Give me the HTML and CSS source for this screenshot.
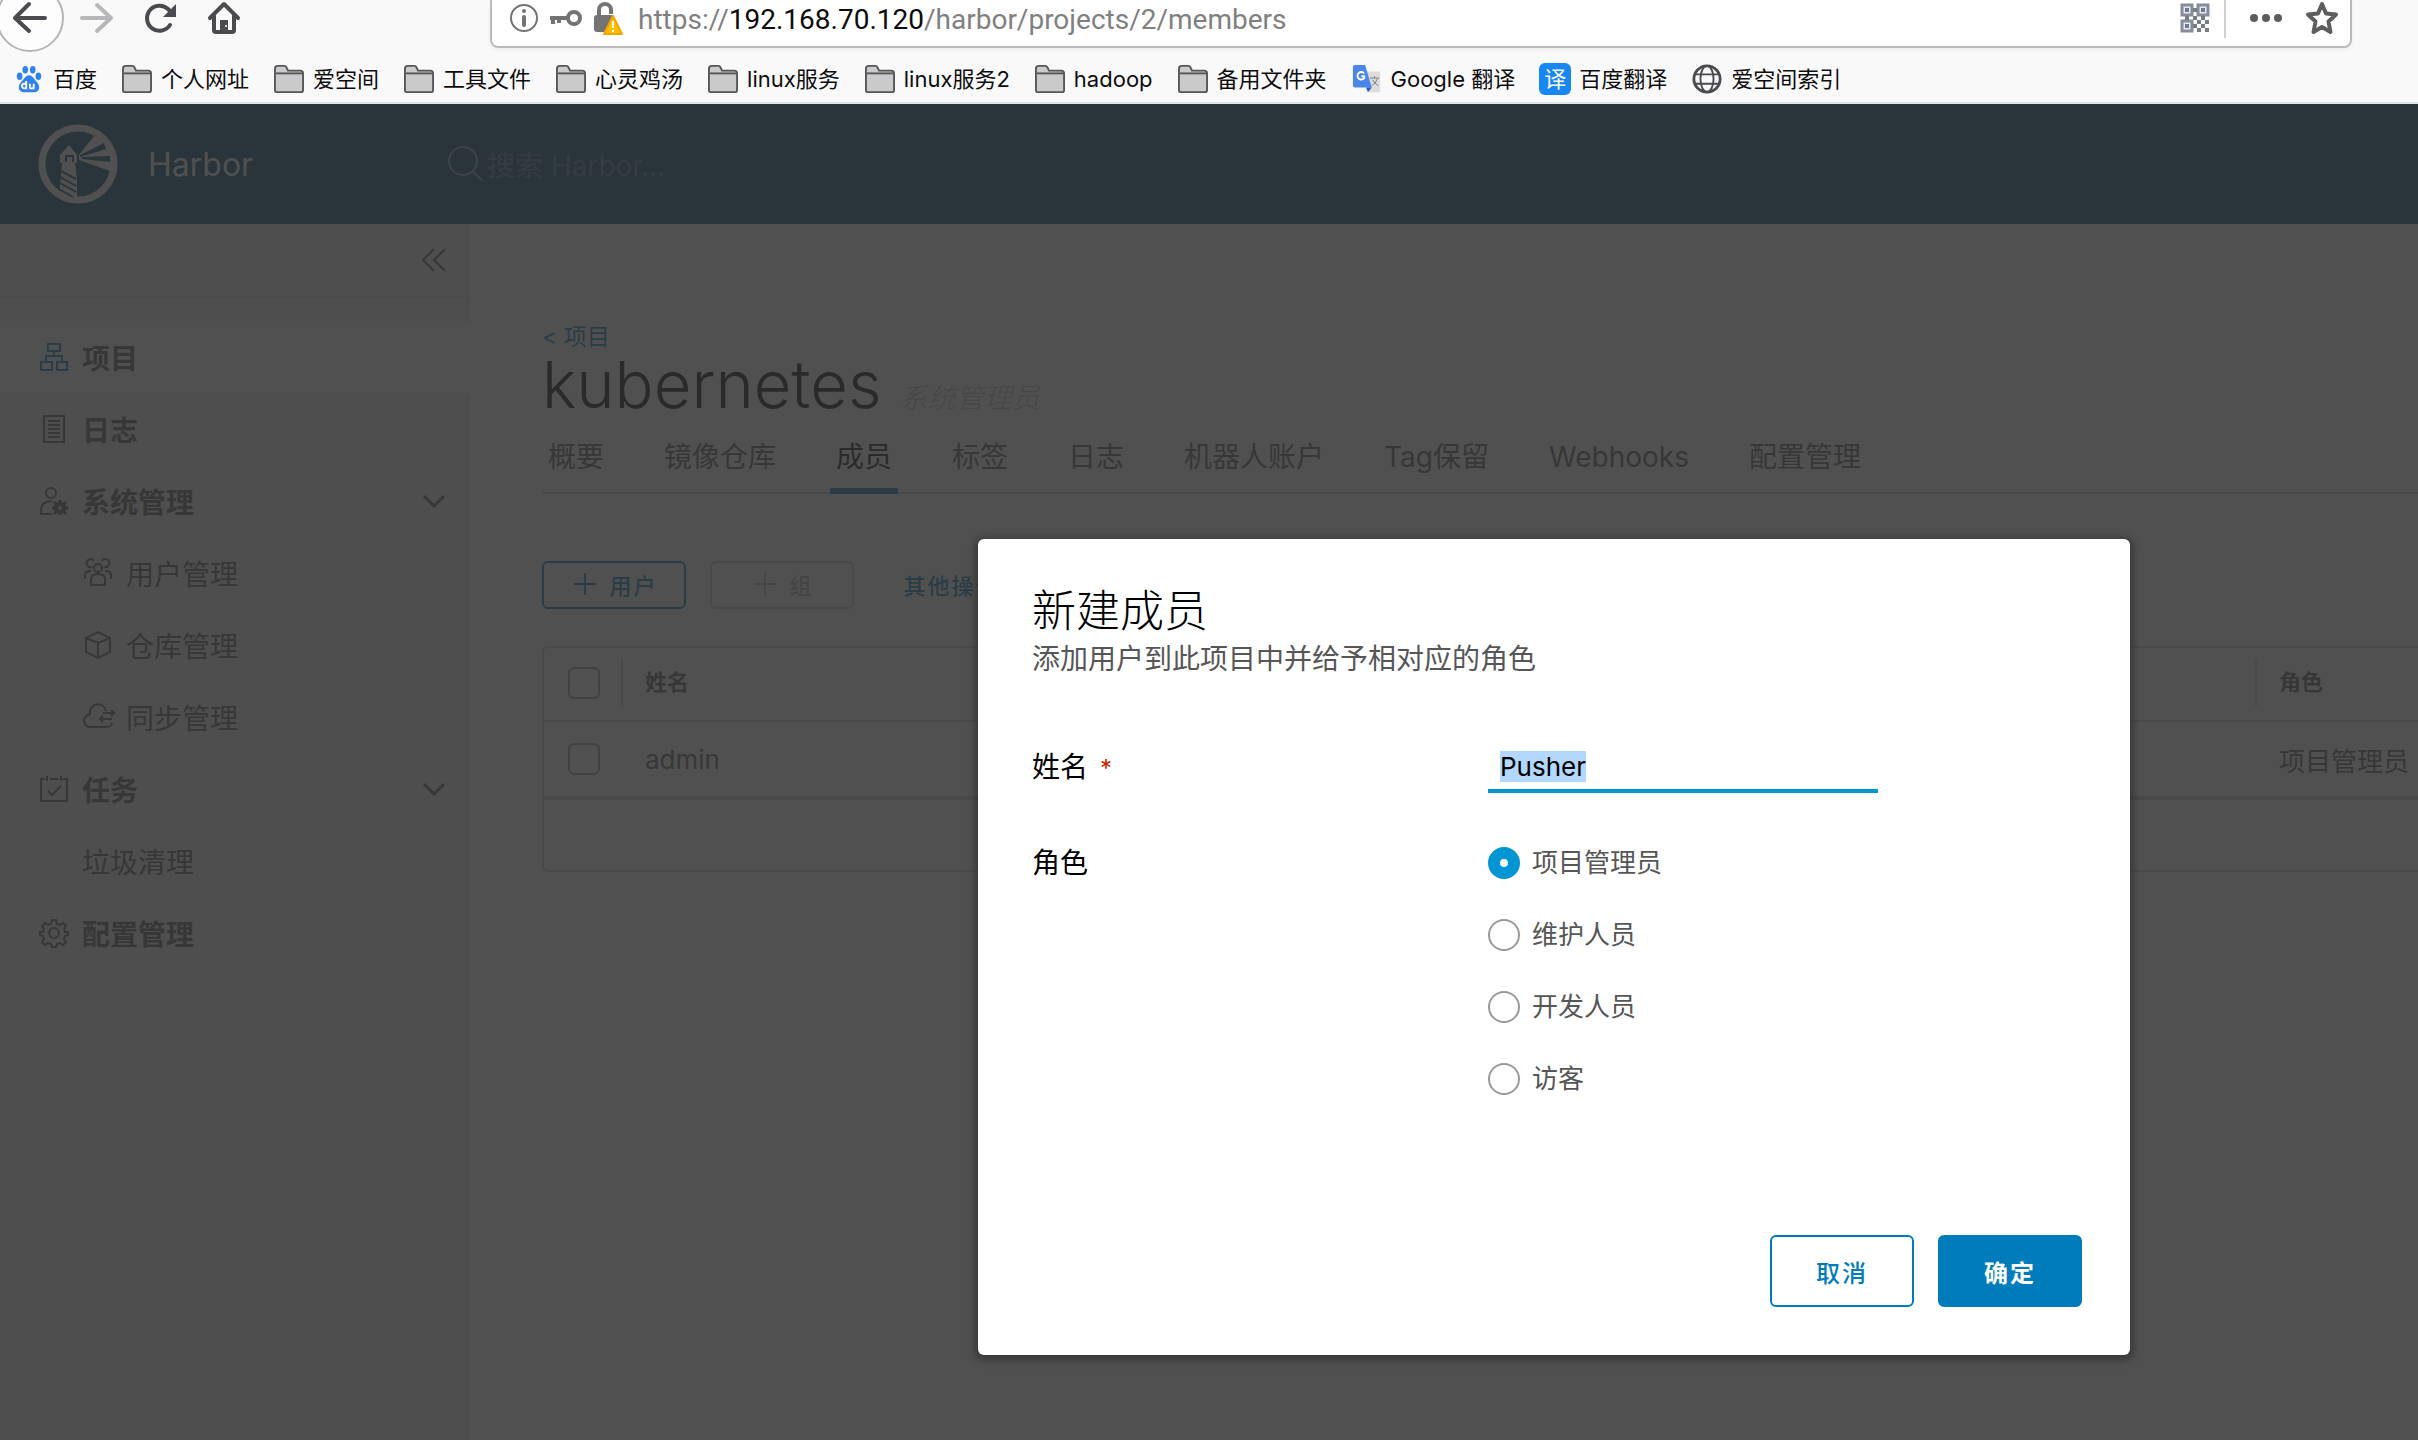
FILE: index.html
```html
<!DOCTYPE html>
<html lang="zh-CN">
<head>
<meta charset="utf-8">
<meta name="viewport" content="width=device-width, initial-scale=1">
<title>Harbor</title>
<link rel="stylesheet" href="styles.css">
</head>
<body>
<svg class="sprite" aria-hidden="true">
  <symbol id="folder" viewBox="0 0 32 32">
    <path d="M1 28V5q0-3 3-3h7q1.500 0 2.500 2l1.500 3h13q3 0 3 3v18q0 2-2 2H3q-2 0-2-2z" fill="#cacaca" stroke="#55555a" stroke-width="2"/>
    <path d="M2 10h28" stroke="#55555a" stroke-width="2"/>
  </symbol>
  <symbol id="chevron" viewBox="0 0 22 22"><path d="M1 6l10 10L21 6" fill="none" stroke="currentColor" stroke-width="3"/></symbol>
  <symbol id="plus" viewBox="0 0 24 24"><path d="M12 1v22M1 12h22" fill="none" stroke="currentColor" stroke-width="2"/></symbol>
</svg>

<div class="browser">
  <div class="toolbar">
    <nav class="history" aria-label="浏览">
      <button class="tool back" type="button" aria-label="后退">
        <svg width="64" height="52" viewBox="0 0 64 52"><circle cx="30" cy="18" r="33" fill="#fdfdfd" stroke="#b5b5b7" stroke-width="2"/><path d="M45 18H16M29 4L15 18l14 13" fill="none" stroke="#4a4a4f" stroke-width="4" stroke-linecap="round" stroke-linejoin="round"/></svg>
      </button>
      <button class="tool" type="button" aria-label="前进">
        <svg width="32" height="36" viewBox="0 0 32 36"><path d="M2 18h28M17 5l14 13-14 13" fill="none" stroke="#b7b7ba" stroke-width="4" stroke-linecap="round" stroke-linejoin="round"/></svg>
      </button>
      <button class="tool" type="button" aria-label="刷新">
        <svg width="32" height="36" viewBox="0 0 32 36"><path d="M26 25A12.500 12.500 0 1 1 24 9l5 5" fill="none" stroke="#4a4a4f" stroke-width="4" stroke-linecap="round"/><path d="M32 4v13H19z" fill="#4a4a4f"/></svg>
      </button>
      <button class="tool" type="button" aria-label="主页">
        <svg width="32" height="36" viewBox="0 0 32 36"><path d="M2 18L16 4l14 14M6 16v14q0 2 2 2h16q2 0 2-2V16" fill="none" stroke="#4a4a4f" stroke-width="4" stroke-linecap="round" stroke-linejoin="round"/><path d="M12 32V20h8v12z" fill="#4a4a4f"/><circle cx="18" cy="26" r="1" fill="#fff"/></svg>
      </button>
    </nav>
    <div class="address">
      <svg width="28" height="32" viewBox="0 0 28 32"><circle cx="14" cy="16" r="13" fill="none" stroke="#737373" stroke-width="2"/><path d="M14 15v8" stroke="#737373" stroke-width="4" stroke-linecap="round"/><circle cx="14" cy="9" r="2" fill="#737373"/></svg>
      <svg width="34" height="32" viewBox="0 0 34 32"><circle cx="25" cy="16" r="6" fill="none" stroke="#737373" stroke-width="4"/><path d="M1 16h18M4 16v6M10 16v5" fill="none" stroke="#737373" stroke-width="4"/></svg>
      <svg width="28" height="32" viewBox="0 0 28 32"><path d="M5 16V8a6 6 0 0 1 12 0v4" fill="none" stroke="#737373" stroke-width="4"/><rect x="0" y="13" width="20" height="17" rx="3" fill="#737373"/><path d="M19 14l9 18H10z" fill="#ffbf00" stroke="#f5a400" stroke-width="2" stroke-linejoin="round"/><path d="M19 19v7M19 28v2" stroke="#fff" stroke-width="2"/></svg>
      <span class="url">https://<span class="host">192.168.70.120</span>/harbor/projects/2/members</span>
      <svg width="28" height="28" viewBox="0 0 28 28"><path d="M1 1h10v10H1zM17 1h10v10H17zM1 17h10v10H1z" fill="#e4e9f2" stroke="#858d9a" stroke-width="3"/><path d="M4 4h4v4H4zM20 4h4v4h-4zM4 20h4v4H4zM12 4h4v4h-4zM4 12h4v4H4zM12 12h4v4h-4zM20 12h4v4h-4zM16 16h4v4h-4zM24 16h4v4h-4zM12 20h4v4h-4zM20 20h4v4h-4zM16 24h4v4h-4zM24 24h4v4h-4z" fill="#777b82"/></svg>
      <span class="divider"></span>
      <button class="tool" type="button" aria-label="更多"><svg width="32" height="36" viewBox="0 0 32 36" fill="#5d5d60"><circle cx="4" cy="18" r="4"/><circle cx="16" cy="18" r="4"/><circle cx="28" cy="18" r="4"/></svg></button>
      <button class="tool" type="button" aria-label="收藏"><svg width="32" height="36" viewBox="0 0 32 36"><path d="M16 4l4 9.500 10 1-7.500 7L24.500 32 16 27l-8.500 5 2-10.500L2 14.500l10-1z" fill="none" stroke="#5d5d60" stroke-width="4" stroke-linejoin="round"/></svg></button>
    </div>
  </div>
  <nav class="bookmarks" aria-label="书签">
    <a href="#"><svg viewBox="0 0 32 32" fill="#3083ee"><ellipse cx="6" cy="13" rx="3" ry="4"/><ellipse cx="12" cy="6" rx="3" ry="4"/><ellipse cx="20" cy="6" rx="3" ry="4"/><ellipse cx="26" cy="13" rx="3" ry="4"/><path d="M16 12c4 0 6 5 9 8 4 5 1 10-3 10H10c-4 0-7-5-3-10 3-3 5-8 9-8z"/><path d="M13 18v8h-2a2 2 0 0 1 0-5h2M17 21v4q0 1 2 1h2v-5" fill="none" stroke="#fff" stroke-width="2"/></svg>百度</a>
    <a href="#"><svg><use href="#folder"/></svg>个人网址</a>
    <a href="#"><svg><use href="#folder"/></svg>爱空间</a>
    <a href="#"><svg><use href="#folder"/></svg>工具文件</a>
    <a href="#"><svg><use href="#folder"/></svg>心灵鸡汤</a>
    <a href="#"><svg><use href="#folder"/></svg>linux服务</a>
    <a href="#"><svg><use href="#folder"/></svg>linux服务2</a>
    <a href="#"><svg><use href="#folder"/></svg>hadoop</a>
    <a href="#"><svg><use href="#folder"/></svg>备用文件夹</a>
    <a href="#"><svg viewBox="0 0 32 32"><path d="M14 8h16v22H18z" fill="#dcdcdc"/><path d="M3 1h11l7 24H3q-2 0-2-2V3q0-2 2-2z" fill="#4a86e8"/><path d="M15 25h6l-4 5z" fill="#2a56c6"/><path d="M13 10a4 4 0 1 0 0 5v-2h-3" fill="none" stroke="#fff" stroke-width="2"/><path d="M19 15h10M24 13v2M27 16q-2 5-6 7M22 17q2 4 6 6" fill="none" stroke="#777" stroke-width="1"/></svg>Google 翻译</a>
    <a href="#"><span class="tile">译</span>百度翻译</a>
    <a href="#"><svg viewBox="0 0 32 32" fill="none" stroke="#4a4a4f" stroke-width="3"><circle cx="16" cy="16" r="14"/><ellipse cx="16" cy="16" rx="7" ry="14" stroke-width="2"/><path d="M3 11h26M3 21h26" stroke-width="2"/></svg>爱空间索引</a>
  </nav>
</div>

<div class="app">
  <header class="header">
    <a class="brand" href="#">
      <svg width="80" height="80" viewBox="0 0 80 80"><circle cx="40" cy="40" r="36" fill="none" stroke="#fff" stroke-width="7"/><path d="M41 31L56 12l12 5 9 18-5 12-31-11z" fill="#fff"/><path d="M42 31l24-12 2 6-26 8zM44 33l28-1v6l-28-3z" fill="#004a70"/><path fill-rule="evenodd" d="M31 21l8 10v8h-2l2 16v21l-18-3 3-34h-2v-8zM27 31v7h2v-5h5v5h2v-7z" fill="#fff"/><path d="M23 47l15 8M22 53l16 9M22 59l16 9M21 65l14 8" stroke="#004a70" stroke-width="2"/></svg>
      <span>Harbor</span>
    </a>
    <label class="search">
      <svg width="40" height="40" viewBox="0 0 40 40" fill="none" stroke="currentColor" stroke-width="2"><circle cx="16" cy="17" r="14"/><path d="M26 28l10 9"/></svg>
      <input type="search" placeholder="搜索 Harbor..." aria-label="搜索 Harbor">
    </label>
  </header>

  <div class="workspace">
    <aside class="sidebar">
      <div class="collapse"><button type="button" aria-label="收起"><svg width="24" height="24" viewBox="0 0 24 24" fill="none" stroke="currentColor" stroke-width="2"><path d="M12 1L1 12l11 11M23 1L12 12l11 11"/></svg></button></div>
      <nav class="menu" aria-label="主菜单">
        <a class="item active" href="#"><svg viewBox="0 0 28 28"><path d="M8 1h12v7H8zM1 19h11v8H1zM17 19h10v8H17zM14 8v5M6 18v-5h16v5"/></svg>项目</a>
        <a class="item" href="#"><svg viewBox="0 0 28 28"><path d="M4 1h20v26H4zM8 6h12M8 10h12M8 14h12M8 18h12M8 22h12"/></svg>日志</a>
        <a class="item" href="#"><svg viewBox="0 0 28 28"><circle cx="11" cy="6" r="5"/><path d="M12 27H1v-5q0-7 11-8"/><circle cx="20" cy="21" r="4" stroke-width="4"/><path d="M20 13v3M20 26v2M12 21h3M25 21h3M14 15l3 3M23 24l3 3M26 15l-3 3M17 24l-3 3" stroke-width="3"/></svg>系统管理<svg class="caret"><use href="#chevron"/></svg></a>
        <a class="item sub" href="#"><svg viewBox="0 0 28 28"><circle cx="14" cy="9" r="4"/><path d="M7 26v-6q0-5 7-5t7 5v6zM8 8a4 4 0 1 1 2-6M20 8a4 4 0 1 0-2-6M1 20v-4q0-4 6-4M27 20v-4q0-4-6-4"/></svg>用户管理</a>
        <a class="item sub" href="#"><svg viewBox="0 0 28 28"><path d="M14 1l12 6v14l-12 6-12-6V7zM2 7l12 5 12-5M14 12v15"/></svg>仓库管理</a>
        <a class="item sub" href="#"><svg viewBox="0 0 28 28"><path d="M22 8a8 8 0 0 0-16 3q-6 2-6 7 1 6 6 6h16q5 0 6-4M19 10h10M27 7l3 3-3 3M28 16H16M19 13l-3 3 3 3"/></svg>同步管理</a>
        <a class="item" href="#"><svg viewBox="0 0 28 28"><path d="M5 4H1v22h26V4h-4M7 1v5M21 1v5M10 4h8M8 16l4 4 9-9"/></svg>任务<svg class="caret"><use href="#chevron"/></svg></a>
        <a class="item plain" href="#">垃圾清理</a>
        <a class="item" href="#"><svg viewBox="0 0 28 28"><circle cx="14" cy="14" r="5"/><path d="M12 1h4l1 4 3 1 3-2 3 3-2 3 1 3 3 0v3l-3 1-1 3 2 3-3 3-3-2-3 1-1 3h-4l-1-3-3-1-3 2-3-3 2-3-1-3-3-1v-3h3l1-3-2-3 3-3 3 2 3-1z"/></svg>配置管理</a>
      </nav>
    </aside>

    <main class="content">
      <a class="crumb" href="#">&lt; 项目</a>
      <h1>kubernetes <em>系统管理员</em></h1>
      <nav class="tabs" aria-label="项目">
        <a href="#">概要</a><a href="#">镜像仓库</a><a class="current" href="#" aria-current="page">成员</a><a href="#">标签</a><a href="#">日志</a><a href="#">机器人账户</a><a href="#">Tag保留</a><a href="#">Webhooks</a><a href="#">配置管理</a>
      </nav>
      <div class="actions">
        <button class="btn small" type="button"><svg><use href="#plus"/></svg>用户</button>
        <button class="btn small" type="button" disabled><svg><use href="#plus"/></svg>组</button>
        <button class="btn small link" type="button">其他操作</button>
      </div>
      <table class="grid">
        <colgroup><col class="col-check"><col><col class="col-role"></colgroup>
        <thead><tr><th><input type="checkbox" aria-label="全选"></th><th><div>姓名</div></th><th><div>角色</div></th></tr></thead>
        <tbody><tr><td><input type="checkbox" aria-label="选择 admin"></td><td>admin</td><td>项目管理员</td></tr></tbody>
        <tfoot><tr><td colspan="3"></td></tr></tfoot>
      </table>
    </main>
  </div>

  <div class="backdrop">
    <form class="modal" role="dialog" aria-labelledby="title">
      <h2 id="title">新建成员</h2>
      <p>添加用户到此项目中并给予相对应的角色</p>
      <div class="row name-row">
        <label for="name">姓名 <span class="required">*</span></label>
        <input class="text" id="name" type="text" value="Pusher" autofocus>
      </div>
      <div class="row" role="radiogroup" aria-labelledby="role">
        <span id="role">角色</span>
        <div class="options">
          <label><input type="radio" name="role" checked>项目管理员</label>
          <label><input type="radio" name="role">维护人员</label>
          <label><input type="radio" name="role">开发人员</label>
          <label><input type="radio" name="role">访客</label>
        </div>
      </div>
      <div class="buttons">
        <button class="btn" type="button">取消</button>
        <button class="btn primary" type="submit">确定</button>
      </div>
    </form>
  </div>
</div>
<script src="main.js"></script>
</body>
</html>
```
FILE: main.js
```js
const nameField = document.getElementById("name");
nameField.focus();
nameField.select();
```
FILE: styles.css
```css
* { box-sizing: border-box; }

body {
  margin: 0;
  min-height: 100vh;
  display: flex;
  flex-direction: column;
  overflow-x: hidden;
  font-family: Inter, "Noto Sans CJK SC", sans-serif;
  color: #565656;
}

a { color: inherit; text-decoration: none; }
button, input { font: inherit; color: inherit; }
svg { flex: none; overflow: visible; }
.sprite { position: absolute; width: 0; height: 0; }

/* Browser chrome */
.browser {
  background: #f9f9fa;
  border-bottom: 2px solid #dfe6e8;
  color: #0c0c0d;
  overflow: hidden;
}
.toolbar { display: flex; align-items: flex-start; height: 52px; padding-right: 66px; }
.history { display: flex; flex: none; width: 490px; gap: 32px; }
.tool { display: flex; padding: 0; border: 0; background: none; }
.back { margin-right: -16px; }
.address {
  flex: 1;
  display: flex;
  align-items: center;
  gap: 11px;
  height: 48px;
  padding: 0 12px 10px 18px;
  background: #fff;
  border: 2px solid #bcbcbc;
  border-top: 0;
  border-radius: 0 0 8px 8px;
  box-shadow: 0 2px 4px rgba(0, 0, 0, .05);
}
.url { flex: 1; padding: 3px 0 0 5px; font-family: Roboto, sans-serif; font-size: 28px; line-height: 36px; color: #808080; white-space: nowrap; }
.host { color: #0c0c0d; }
.divider { width: 2px; height: 40px; margin-left: 4px; background: #d0d0d2; }
.address .divider + .tool { margin: 0 13px; }
.bookmarks {
  display: flex;
  align-items: center;
  gap: 24px;
  height: 50px;
  padding: 4px 13px 0;
  font-size: 22px;
  line-height: 32px;
  white-space: nowrap;
}
.bookmarks a { display: flex; align-items: center; gap: 8px; }
.bookmarks svg { width: 32px; height: 30px; }
.tile { width: 32px; border-radius: 6px; background: #1887f2; color: #fff; text-align: center; }

/* Application */
.app { flex: 1; display: flex; flex-direction: column; position: relative; background: #fff; }
.header { display: flex; height: 120px; background: #004a70; color: #fff; }
.brand { display: flex; align-items: center; gap: 30px; width: 401px; padding-left: 38px; font-size: 32px; border-right: 2px solid #0d5277; }
.search { display: flex; align-items: center; padding-left: 46px; color: rgba(255, 255, 255, .5); }
.search input { width: 400px; padding: 4px 0 0; border: 0; background: none; font-size: 28px; }
.search input::placeholder { color: rgba(255, 255, 255, .3); }

.workspace { flex: 1; display: flex; }
.sidebar { flex: none; width: 470px; background: #eee; border-right: 4px solid #e4e4e4; }
.collapse { display: flex; justify-content: flex-end; align-items: center; height: 74px; padding-right: 20px; border-bottom: 2px solid #d4d4d4; }
.collapse button { display: flex; padding: 0; border: 0; background: none; }
.menu { display: flex; flex-direction: column; padding-top: 23px; }
.item { display: flex; align-items: center; gap: 14px; height: 72px; padding: 0 21px 0 40px; font-size: 28px; font-weight: 700; }
.item svg { width: 28px; height: 28px; fill: none; stroke: currentColor; stroke-width: 2px; }
.item .caret { width: 22px; height: 22px; margin-left: auto; }
.active { margin-right: -4px; background: #fff; }
.active svg { color: #007cbb; }
.sub { padding-left: 84px; font-weight: 400; }
.plain { padding-left: 82px; font-weight: 400; }

.content { flex: 1; min-width: 0; padding: 99px 0 0 72px; }
.crumb { display: block; font-size: 23px; line-height: 28px; color: #007cbb; }
h1 { margin: 0; font-size: 65px; line-height: 68px; font-weight: 300; color: #000; white-space: nowrap; }
h1 em { font-size: 28px; font-weight: 300; color: #c0c0c0; }
.tabs { display: flex; gap: 48px; height: 62px; border-bottom: 2px solid #ccc; font-size: 28px; line-height: 50px; white-space: nowrap; }
.tabs a { padding: 0 6px; height: 62px; }
.current { color: #000; border-bottom: 6px solid #007cbb; }

.btn {
  width: 144px;
  height: 72px;
  padding: 0;
  border: 2px solid #007cbb;
  border-radius: 6px;
  background: none;
  color: #007cbb;
  font-size: 24px;
  font-weight: 500;
  letter-spacing: 2px;
}
.small { display: flex; align-items: center; justify-content: center; gap: 12px; height: 48px; padding: 0 0 2px 3px; font-size: 22px; }
.small svg { width: 24px; height: 24px; }
.btn:disabled { color: #b4b4b4; border-color: #c8c8c8; }
.link { border-color: transparent; }
.primary { background: #007cbb; color: #fff; }
.actions { display: flex; gap: 24px; padding: 67px 0 37px; }

.grid { width: 100%; border: 2px solid #ccc; border-right: 0; border-radius: 6px 0 0 6px; border-spacing: 0; table-layout: fixed; }
.col-check { width: 77px; }
.col-role { width: 163px; }
.grid th, .grid td { height: 74px; padding: 0 0 2px; text-align: left; vertical-align: middle; white-space: nowrap; border-bottom: 2px solid #ccc; }
.grid td { height: 78px; padding: 0 0 0 24px; font-size: 26px; border-bottom: 4px solid #ccc; }
.grid tfoot td { height: 70px; border: 0; }
.grid th:first-child, .grid td:first-child { padding-left: 24px; }
.grid th div { height: 48px; padding-left: 22px; border-left: 2px solid #d8d8d8; font-size: 22px; line-height: 46px; }
.grid input { appearance: none; display: block; width: 32px; height: 32px; margin: 0; border: 2px solid #9a9a9a; border-radius: 6px; }

/* Dialog */
.backdrop { position: absolute; inset: 0; padding: 435px 288px 0 978px; background: rgba(49, 49, 49, .85); }
.modal {
  min-height: 816px;
  display: flex;
  flex-direction: column;
  padding: 44px 48px 48px 54px;
  border-radius: 6px;
  background: #fff;
  box-shadow: 0 2px 6px 4px rgba(40, 40, 40, .5);
}
h2 { margin: 0; font-size: 44px; line-height: 56px; font-weight: 200; color: #000; }
p { margin: 0; font-size: 28px; line-height: 40px; }
.row { display: grid; grid-template-columns: 456px 1fr; font-size: 28px; line-height: 48px; color: #000; }
.name-row { padding: 64px 0 46px; }
.required { padding-left: 4px; color: #c92100; font-size: 24px; }
.text { width: 390px; height: 50px; padding: 1px 12px 0; border: 0; border-bottom: 4px solid #0095d3; background: none; outline: 0; font-size: 26px; color: #000; }
.text::selection { background: #b3d7ff; color: #000; }
.options { display: grid; gap: 24px; font-size: 26px; color: #565656; }
.options label { display: flex; align-items: center; gap: 12px; }
.options input { appearance: none; width: 32px; height: 32px; margin: 0; border: 2px solid #9a9a9a; border-radius: 50%; }
.options input:checked { border: 12px solid #0095d3; background: #fff; }
.buttons { display: flex; justify-content: flex-end; gap: 24px; margin-top: auto; }
.primary.btn { font-weight: 700; }
```
